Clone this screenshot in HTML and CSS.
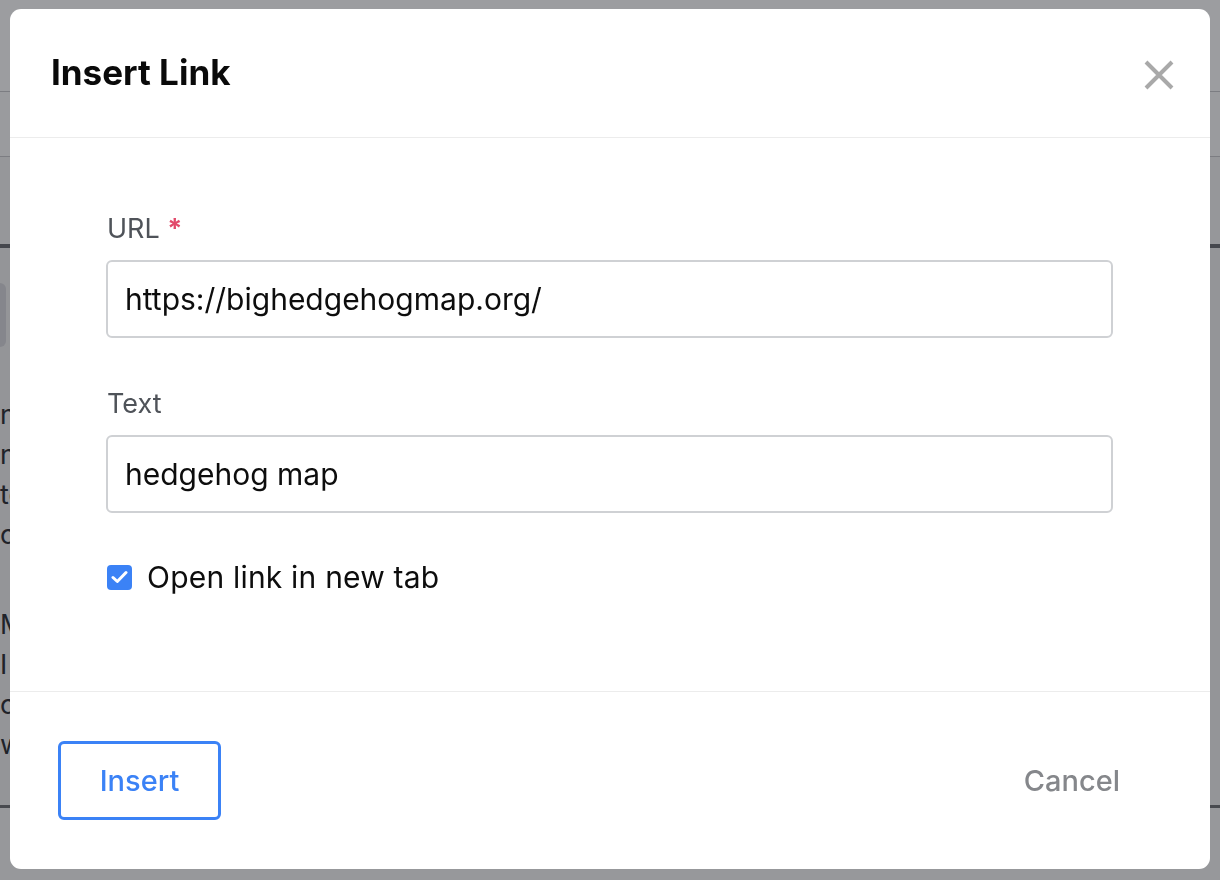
FILE: index.html
```html
<!DOCTYPE html>
<html lang="en">
<head>
<meta charset="utf-8">
<title>Insert Link</title>
<link rel="stylesheet" href="styles.css">
</head>
<body>
<div class="page">
  <div class="topbar"></div>
  <div class="toolbar"></div>
  <div class="editor-top"></div>
  <div class="editor">
    <div class="chip"></div>
    <p class="para">now the hedgehog map shows recent sightings</p>
    <p class="para">nearby gardens, parks and streets</p>
    <p class="para">to help the little animals at night</p>
    <p class="para">click on a pin to see each report</p>
    <p class="para gap">Many hedgehogs travel two kilometres a night in search of food, water, mates, and shelter, too,</p>
    <p class="para">I hope you will add your sightings</p>
    <p class="para">community so that more people help the survey and make the map even better for</p>
    <p class="para">wildlife everywhere.</p>
  </div>
  <div class="editor-bottom"></div>
</div>

<div class="overlay">
  <div class="modal" role="dialog" aria-labelledby="modal-title">
    <div class="modal-header">
      <h2 id="modal-title" class="modal-title">Insert Link</h2>
      <button class="close-btn" aria-label="Close">
        <svg width="30" height="30" viewBox="0 0 30 30" aria-hidden="true">
          <path d="M2 2 L28 28 M28 2 L2 28" stroke="#a9a9a9" stroke-width="4" fill="none"/>
        </svg>
      </button>
    </div>
    <div class="modal-body">
      <div class="field">
        <label class="field-label" for="url">URL <span class="req">*</span></label>
        <input id="url" class="field-input" type="text" value="https://bighedgehogmap.org/">
      </div>
      <div class="field field-last">
        <label class="field-label" for="text">Text</label>
        <input id="text" class="field-input" type="text" value="hedgehog map">
      </div>
      <label class="check-row">
        <span class="check-box">
          <svg width="17" height="14" viewBox="0 0 17 14" aria-hidden="true">
            <path d="M2 7.5 L6.3 11.5 L15 2.5" stroke="#fff" stroke-width="3" fill="none" stroke-linecap="round" stroke-linejoin="round"/>
          </svg>
        </span>
        <span class="check-text">Open link in new tab</span>
      </label>
    </div>
    <div class="modal-footer">
      <button class="btn btn-primary">Insert</button>
      <button class="btn btn-cancel">Cancel</button>
    </div>
  </div>
</div>
</body>
</html>
```

FILE: styles.css
```css
* { box-sizing: border-box; }
html, body { margin: 0; padding: 0; }
body {
  width: 1220px;
  height: 880px;
  overflow: hidden;
  font-family: Inter, "Liberation Sans", sans-serif;
  background: #ffffff;
}

/* background page */
.page {
  width: 1220px;
  height: 880px;
  display: flex;
  flex-direction: column;
  background: #fafafa;
}
.topbar {
  height: 92px;
  border-bottom: 1px solid #c8c8cc;
  background: #ffffff;
  flex: none;
}
.toolbar {
  height: 65px;
  border-bottom: 1px solid #c8c8cc;
  background: #fbfbfb;
  flex: none;
}
.editor-top {
  height: 91px;
  border-bottom: 4px solid #6a6c70;
  background: #f4f4f4;
  flex: none;
}
.editor {
  height: 557px;
  padding: 35px 0 0 0;
  background: #f1f1f2;
  flex: none;
}
.chip {
  width: 6px;
  height: 64px;
  background: #d8d8dc;
  border-radius: 0 6px 6px 0;
  margin-bottom: 48px;
}
.para {
  margin: 0;
  font-size: 27px;
  line-height: 40px;
  color: #2a2d33;
  white-space: nowrap;
  overflow: hidden;
}
.para.gap { margin-top: 50px; }
.editor-bottom {
  flex: 1;
  border-top: 3px solid #6f7074;
  background: #f6f6f6;
}

/* overlay + modal */
.overlay {
  position: fixed;
  inset: 0;
  background: rgba(20, 22, 28, 0.42);
  display: flex;
  align-items: flex-start;
  justify-content: center;
  padding-top: 9px;
}
.modal {
  width: 1200px;
  height: 860px;
  background: #ffffff;
  border-radius: 11px;
  display: flex;
  flex-direction: column;
  overflow: hidden;
}
.modal-header {
  height: 129px;
  flex: none;
  display: flex;
  align-items: center;
  justify-content: space-between;
  padding: 0 36px 0 41px;
  border-bottom: 1px solid #ececec;
}
.modal-title {
  margin: 0;
  font-size: 35px;
  font-weight: 700;
  color: #0a0a0a;
  letter-spacing: 0;
  padding-bottom: 2px;
}
.close-btn {
  background: none;
  border: 0;
  padding: 0;
  width: 30px;
  height: 30px;
  display: flex;
  cursor: pointer;
  margin-top: 3px;
}

.modal-body {
  flex: 1;
  padding: 74px 97px 0 96px;
  display: flex;
  flex-direction: column;
}
.field {
  display: flex;
  flex-direction: column;
  margin-bottom: 49px;
}
.field-last { margin-bottom: 46px; }
.field-label {
  font-size: 27px;
  line-height: 34px;
  color: #4f5359;
  margin: 0 0 14px 1px;
}
.req { color: #e24a6b; font-weight: 700; }
.field-input {
  height: 78px;
  width: 100%;
  border: 2px solid #cfd1d4;
  border-radius: 6px;
  padding: 0 17px;
  font-family: Inter, "Liberation Sans", sans-serif;
  font-size: 30px;
  color: #0d0d0d;
  background: #fff;
  outline: none;
}
.check-row {
  display: flex;
  align-items: center;
  gap: 15px;
  margin-left: 1px;
}
.check-box {
  width: 25px;
  height: 25px;
  border-radius: 4px;
  background: #3b82f6;
  display: flex;
  align-items: center;
  justify-content: center;
}
.check-text {
  font-size: 30px;
  color: #0d0d0d;
  letter-spacing: 0.2px;
}

.modal-footer {
  height: 178px;
  flex: none;
  border-top: 1px solid #ececec;
  display: flex;
  align-items: center;
  justify-content: space-between;
  padding: 0 48px;
}
.btn {
  height: 79px;
  padding: 0 39px;
  font-family: Inter, "Liberation Sans", sans-serif;
  font-size: 29px;
  font-weight: 500;
  background: #fff;
  border-radius: 6px;
  cursor: pointer;
}
.btn-primary {
  border: 3px solid #3b82f6;
  color: #3b82f6;
  width: 163px;
  padding: 0;
}
.btn-cancel {
  border: 3px solid transparent;
  color: #85878b;
}
```
